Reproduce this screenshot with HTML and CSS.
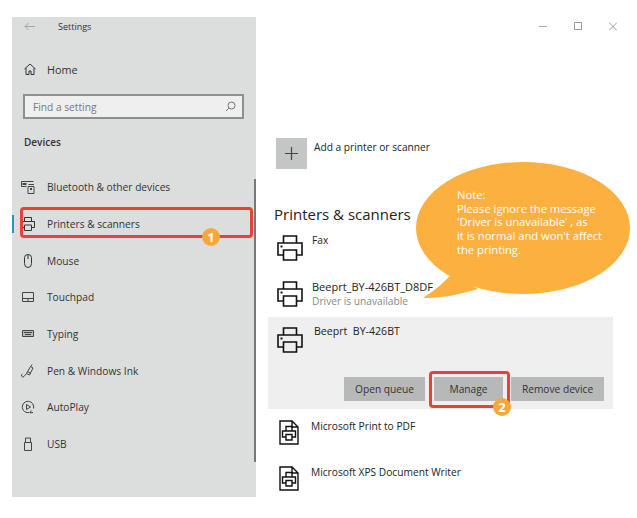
FILE: index.html
```html
<!DOCTYPE html>
<html lang="en">
<head>
    <meta charset="UTF-8">
    <title>Settings</title>
    <link rel="stylesheet" href="styles.css">
</head>

<body>
    <svg class="defs" width="0" height="0">
        <symbol id="printer" viewBox="0 0 26 26">
            <path d="M6.500 8V1h13v7M6.500 20H1V8h24v12h-5.500M6.500 15h13v10h-13z" fill="none" stroke="#111" stroke-width="1.600"/>
            <rect x="3.500" y="10.500" width="2" height="2" fill="#111"/>
        </symbol>
        <symbol id="pdf" viewBox="0 0 20 25">
            <path d="M1 1h12l6 6v17H1zM13 1v6h6" fill="none" stroke="#111" stroke-width="1.400"/>
            <path d="M7 11V6.500h6V11M7 17H3.500v-6h13v6H13M7 14.500h6V20H7z" fill="none" stroke="#111" stroke-width="1.400"/>
        </symbol>
    </svg>

    <div class="window">
        <aside class="sidebar">
            <div class="titlebar">
                <svg class="back" width="11" height="9" viewBox="0 0 11 9"><path d="M11 4.500H1M4.500 1L1 4.500 4.500 8" fill="none" stroke="#a4a6a5"/></svg>
                <span>Settings</span>
            </div>
            <div class="home">
                <svg width="12" height="12" viewBox="0 0 12 12"><path d="M.5 6L6 1l5.500 5M2 5v6.500h3V8h2v3.500h3V5" fill="none" stroke="#333"/></svg>
                <span>Home</span>
            </div>
            <div class="search">
                <span>Find a setting</span>
                <svg width="11" height="11" viewBox="0 0 11 11"><circle cx="6.500" cy="4.500" r="3.500" fill="none" stroke="#777"/><path d="M4 7L1 10" stroke="#777"/></svg>
            </div>
            <h2 class="section">Devices</h2>
            <ul class="nav">
                <li>
                    <svg width="14" height="14" viewBox="0 0 14 14"><path d="M.5 1.500h12M.5 1.500v5h5M7 6.500h6v7H7zM7.500 4.500h5.500" fill="none" stroke="#444"/><rect x="1.500" y="3" width="4" height="2" fill="#444"/><rect x="9" y="8" width="2" height="2" fill="#444"/></svg>
                    <span>Bluetooth &amp; other devices</span>
                </li>
                <li class="current">
                    <svg width="14" height="14" viewBox="0 0 14 14"><path d="M3.500 4V.5h7V4M3.500 10.500h-3v-6h13v6h-3M3.500 8h7v5.500h-7z" fill="none" stroke="#333"/></svg>
                    <span>Printers &amp; scanners</span>
                </li>
                <li>
                    <svg width="14" height="14" viewBox="0 0 14 14"><path d="M3.500 3.500a3.500 3 0 0 1 7 0v6a3.500 4 0 0 1-7 0zM7 1v4" fill="none" stroke="#333"/></svg>
                    <span>Mouse</span>
                </li>
                <li>
                    <svg width="14" height="14" viewBox="0 0 14 14"><path d="M1.500 2.500h11v9h-11zM1.500 8.500h11M7 8.500v3" fill="none" stroke="#444"/></svg>
                    <span>Touchpad</span>
                </li>
                <li>
                    <svg width="14" height="14" viewBox="0 0 14 14"><path d="M1.500 3.500h11v6h-11z" fill="#bbb" stroke="#444"/><path d="M3 5.500h8M4 7.500h6" stroke="#444"/></svg>
                    <span>Typing</span>
                </li>
                <li>
                    <svg width="14" height="14" viewBox="0 0 14 14"><path d="M5.500 9.500L9.500 2.500l2.500 1.500-3.500 7zM6.500 7.500l3.500 2M10 2.500l1-2M5.500 9.500l-2.500 3a1.500 1.500 0 1 1-1.500-2.500" fill="none" stroke="#444"/></svg>
                    <span>Pen &amp; Windows Ink</span>
                </li>
                <li>
                    <svg width="14" height="14" viewBox="0 0 14 14"><path d="M8.500 12.500A5.700 5.700 0 1 1 12.500 8.500M5.500 4.500v5L9.500 7zM10 10.500l-.5 2.500 2.500-.5" fill="none" stroke="#444"/></svg>
                    <span>AutoPlay</span>
                </li>
                <li>
                    <svg width="14" height="14" viewBox="0 0 14 14"><path d="M3.500 5.500h7v8h-7zM4.500 5.500V1h5v4.500" fill="none" stroke="#444"/></svg>
                    <span>USB</span>
                </li>
            </ul>
            <div class="scrollbar"></div>
        </aside>

        <main class="content">
            <div class="controls">
                <svg width="8" height="9" viewBox="0 0 8 9"><path d="M0 4.500h8" stroke="#aaa"/></svg>
                <svg width="8" height="9" viewBox="0 0 8 9"><path d="M.5.500h7v7h-7z" fill="none" stroke="#999"/></svg>
                <svg width="8" height="9" viewBox="0 0 8 9"><path d="M0 .5l8 8M8 .5l-8 8" stroke="#999"/></svg>
            </div>

            <div class="add-row">
                <div class="add-btn">
                    <svg width="13" height="13" viewBox="0 0 13 13"><path d="M6.500 0v13M0 6.500h13" stroke="#444" stroke-width="1.200"/></svg>
                </div>
                <span>Add a printer or scanner</span>
            </div>

            <h1>Printers &amp; scanners</h1>

            <div class="device fax">
                <svg class="icon" width="26" height="26"><use href="#printer"/></svg>
                <div class="name">Fax</div>
            </div>
            <div class="device beeprt-d8df">
                <svg class="icon" width="26" height="26"><use href="#printer"/></svg>
                <div>
                    <div class="name">Beeprt_BY-426BT_D8DF</div>
                    <div class="status">Driver is unavailable</div>
                </div>
            </div>

            <div class="selected">
                <div class="device">
                    <svg class="icon" width="26" height="26"><use href="#printer"/></svg>
                    <div class="name">Beeprt&nbsp; BY-426BT</div>
                </div>
                <div class="actions">
                    <button class="queue">Open queue</button>
                    <button class="manage">Manage</button>
                    <button class="remove">Remove device</button>
                </div>
            </div>

            <div class="device pdf">
                <svg class="icon" width="20" height="25"><use href="#pdf"/></svg>
                <div class="name">Microsoft Print to PDF</div>
            </div>
            <div class="device xps">
                <svg class="icon" width="20" height="25"><use href="#pdf"/></svg>
                <div class="name">Microsoft XPS Document Writer</div>
            </div>
        </main>
    </div>

    <!-- annotations drawn over the screenshot -->
    <div class="mark mark-printers"></div>
    <div class="badge badge-1">1</div>
    <div class="mark mark-manage"></div>
    <div class="badge badge-2">2</div>

    <svg class="bubble" width="220" height="145" viewBox="0 0 220 145">
        <ellipse cx="113" cy="69" rx="107" ry="66" fill="#fbb03f"/>
        <path d="M42 115C32 125 24 132 13 139C35 139 50 135 68 130z" fill="#fbb03f"/>
    </svg>
    <p class="bubble-text">Note:<br>Please ignore the message<br>'Driver is unavailable' , as<br>it is normal and won't affect<br>the printing.</p>
</body>
</html>
```

FILE: styles.css
```css
* {
    box-sizing: border-box;
}
body {
    margin: 0;
    background-color: #fff;
    font-family: "Open Sans", "Noto Sans", sans-serif;
    font-size: 10.200px;
    color: #333;
    position: relative;
    height: 518px;
    overflow: hidden;
}
.defs {
    position: absolute;
}
.window {
    display: flex;
    margin: 17px 0 0 12px;
}

/* left column */
.sidebar {
    position: relative;
    width: 244px;
    height: 480px;
    background-color: #dcdedd;
    flex-shrink: 0;
}
.titlebar {
    display: flex;
    align-items: center;
    height: 19px;
    padding-left: 12px;
    font-size: 9px;
}
.back {
    margin-right: 23px;
}
.home {
    display: flex;
    align-items: center;
    gap: 11px;
    margin-top: 23px;
    padding-left: 12px;
    height: 20px;
    font-size: 10.800px;
}
.search {
    display: flex;
    align-items: center;
    justify-content: space-between;
    margin: 15px 12px 0 11px;
    height: 25px;
    padding: 0 6px 0 8px;
    background-color: #efefef;
    border: 2px solid #8e9090;
    color: #777;
}
.section {
    margin: 16px 0 0 12px;
    font-size: 10px;
    font-weight: 600;
    line-height: 14px;
}
.nav {
    list-style: none;
    margin: 20px 0 0;
    padding: 0;
}
.nav li {
    position: relative;
    display: flex;
    align-items: center;
    gap: 12px;
    height: 36.700px;
    padding-left: 9px;
    white-space: nowrap;
}
.nav li.current::before {
    content: "";
    position: absolute;
    left: 0;
    top: 9px;
    bottom: 9px;
    width: 2px;
    background-color: #2f8fc0;
}
.scrollbar {
    position: absolute;
    right: 0;
    top: 162px;
    width: 2px;
    height: 283px;
    background-color: #777;
}

/* right column */
.content {
    flex: 1;
    height: 480px;
    padding-left: 12px;
    color: #222;
}
.controls {
    display: flex;
    justify-content: flex-end;
    align-items: center;
    gap: 27px;
    height: 18px;
    padding-right: 20px;
}
.add-row {
    display: flex;
    align-items: flex-start;
    gap: 7px;
    margin: 103px 0 0 8px;
    line-height: 18px;
}
.add-btn {
    display: flex;
    align-items: center;
    justify-content: center;
    width: 31px;
    height: 31px;
    background-color: #c4c6c6;
}
h1 {
    margin: 35px 0 0 6px;
    font-size: 15px;
    font-weight: 400;
    line-height: 20px;
    color: #222;
}
.device {
    display: flex;
    align-items: flex-start;
    gap: 9px;
    padding-left: 9px;
}
.name {
    line-height: 14px;
    color: #222;
}
.status {
    line-height: 14px;
    color: #888;
}
.fax {
    margin-top: 11px;
    height: 46px;
}
.fax .name {
    margin-top: -2px;
}
.beeprt-d8df .name {
    margin-top: -1px;
    font-size: 11px;
}
.selected {
    margin-top: 9px;
    width: 345px;
    height: 92px;
    background-color: #efefef;
    padding-top: 10px;
}
.selected .name {
    margin-left: 2px;
    margin-top: -3px;
    font-size: 10.600px;
}
.actions {
    display: flex;
    gap: 9px;
    margin: 24px 9px 0 76px;
}
.actions button {
    height: 24px;
    border: 0;
    padding: 0;
    background-color: #b7b8b8;
    font: inherit;
    color: #333;
}
.queue {
    width: 81px;
}
.manage {
    width: 69px;
}
.remove {
    width: 93px;
    margin-left: -1px;
}
.pdf {
    margin-top: 11px;
    padding-left: 11px;
    gap: 12px;
}
.xps {
    margin-top: 21px;
    padding-left: 11px;
    gap: 12px;
}
.pdf .name,
.xps .name {
    margin-top: -1px;
}

/* annotations */
.mark {
    position: absolute;
    border: 3px solid #e8403a;
    border-radius: 4px;
}
.mark-printers {
    left: 20px;
    top: 207px;
    width: 233px;
    height: 31px;
}
.mark-manage {
    left: 429px;
    top: 371px;
    width: 81px;
    height: 37px;
}
.badge {
    position: absolute;
    width: 18px;
    height: 18px;
    border-radius: 50%;
    background-color: #f9a63a;
    color: #fff;
    font-size: 13px;
    font-weight: 700;
    line-height: 18px;
    text-align: center;
}
.badge-1 {
    left: 202px;
    top: 228px;
}
.badge-2 {
    left: 493px;
    top: 398px;
}
.bubble {
    position: absolute;
    left: 410px;
    top: 159px;
}
.bubble-text {
    position: absolute;
    left: 457px;
    top: 188px;
    margin: 0;
    color: #fff;
    font-size: 11.200px;
    line-height: 13.700px;
    white-space: nowrap;
}
```
